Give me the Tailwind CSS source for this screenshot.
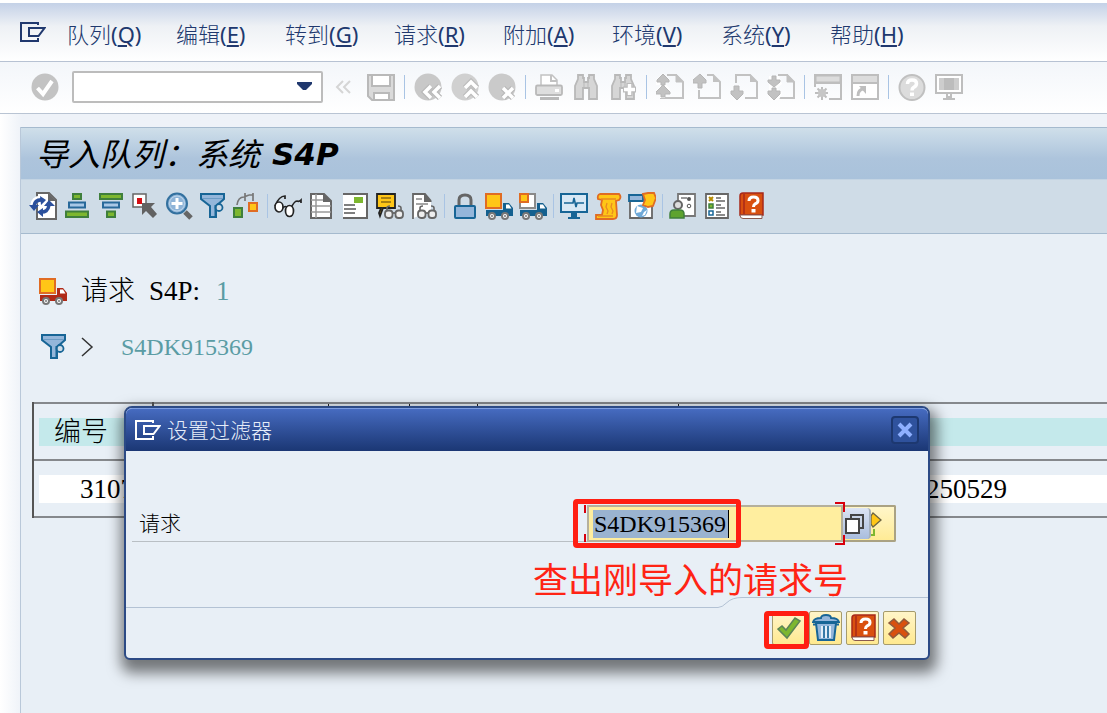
<!DOCTYPE html>
<html lang="zh-CN">
<head>
  <meta charset="UTF-8">
  <meta name="viewport" content="width=device-width, initial-scale=1.0">
  <title>导入队列</title>
  <script src="https://cdn.jsdelivr.net/npm/@tailwindcss/browser@4"></script>
</head>
<body class="relative min-h-screen flex flex-col overflow-x-hidden bg-white text-black font-light font-['Noto_Sans','Noto_Sans_CJK_SC',sans-serif]">

  <!-- Shared icons -->
  <svg class="hidden">
    <symbol id="menu-mark" viewBox="0 0 26 20">
      <path d="M18 3V1H1v18h17v-3M9 6h15.500l-6 8H9z" fill="none" stroke="currentColor" stroke-width="2"/>
    </symbol>
    <symbol id="page" viewBox="0 0 28 28">
      <path d="M20 1l7 8h-7z" fill="#c2c2c2" stroke="#c2c2c2"/>
      <path d="M11 2h9l7 7v16H5v-6" fill="none" stroke="#c2c2c2" stroke-width="2"/>
    </symbol>
    <symbol id="book" viewBox="0 0 28 28">
      <path d="M3 4q0-3 3-3h20v22H3z" fill="#d9500f" stroke="#a8281a" stroke-width="1.500"/>
      <path d="M7 2v20" stroke="#a8281a" stroke-width="1.500"/>
      <path d="M3 23q0 3.500 3 3.500h19V23z" fill="#fff" stroke="#8a5a50"/>
      <path d="M12 9q0-4 4.500-4t4.500 3.500q0 2.500-3 3.500-1.500 1-1.500 3" fill="none" stroke="#fff" stroke-width="3"/>
      <path d="M14.500 17h4v3.500h-4z" fill="#fff"/>
    </symbol>
    <symbol id="filter" viewBox="0 0 28 28">
      <path d="M2 2h23v5l-8 7v11h-6V14L2 7z" fill="#94b6da" stroke="#176596" stroke-width="2"/>
      <path d="M3 6.500h21" stroke="#6c9cc5"/>
      <circle cx="20" cy="15.500" r="3.500" fill="#cfdce7" stroke="#176596" stroke-width="1.800"/>
      <path d="M16.500 13v12" stroke="#176596" stroke-width="2"/>
    </symbol>
    <symbol id="truck" viewBox="0 0 28 28">
      <path d="M1 18h27v6H1zM18 11h6l4 5v3H18z" fill="currentColor"/>
      <path d="M21 12.500h3l2.500 4H21z" fill="#fff"/>
      <circle cx="7" cy="24" r="3" fill="#fff" stroke="#777" stroke-width="2"/>
      <circle cx="20" cy="24" r="3" fill="#fff" stroke="#777" stroke-width="2"/>
      <circle cx="7" cy="24" r="1" fill="#777"/><circle cx="20" cy="24" r="1" fill="#777"/>
    </symbol>
    <symbol id="glasses" viewBox="0 0 20 14">
      <path d="M3 6V3q0-2 3-2M17 6V3q0-2-3-2" fill="none" stroke="#666" stroke-width="1.600"/>
      <rect x="1" y="5.500" width="7.500" height="7.500" rx="3" fill="#eee" stroke="#666" stroke-width="1.800"/>
      <rect x="11.500" y="5.500" width="7.500" height="7.500" rx="3" fill="#eee" stroke="#666" stroke-width="1.800"/>
      <path d="M8.500 8h3" stroke="#666" stroke-width="1.800"/>
    </symbol>
    <symbol id="binoculars" viewBox="0 0 28 28">
      <path d="M6 2h5v3h1v4h4V5h1V2h5v4l3 7v13h-8V15h-6v11H3V13l3-7z" fill="#d6d6d6" stroke="#b9b9b9" stroke-width="1.800"/>
      <path d="M12 10v5M16 10v5" stroke="#b9b9b9"/>
    </symbol>
  </svg>

  <!-- Menu -->
  <nav class="flex items-center h-[62px] pt-1 pl-[20px] border-t-[3px] border-t-white border-b border-b-[#b7c2d3] bg-linear-to-b from-[#c4d1e7] via-[#eef1f5] via-40% to-white text-[22px] leading-8 text-[#20386e] [&_span]:font-normal">
    <svg class="w-[26px] h-[20px] mr-[21px] mb-1 shrink-0"><use href="#menu-mark"/></svg>
    <button class="w-[109px] shrink-0 text-left">队列<span>(<u>Q</u>)</span></button>
    <button class="w-[109px] shrink-0 text-left">编辑<span>(<u>E</u>)</span></button>
    <button class="w-[109px] shrink-0 text-left">转到<span>(<u>G</u>)</span></button>
    <button class="w-[109px] shrink-0 text-left">请求<span>(<u>R</u>)</span></button>
    <button class="w-[109px] shrink-0 text-left">附加<span>(<u>A</u>)</span></button>
    <button class="w-[109px] shrink-0 text-left">环境<span>(<u>V</u>)</span></button>
    <button class="w-[109px] shrink-0 text-left">系统<span>(<u>Y</u>)</span></button>
    <button class="w-[109px] shrink-0 text-left">帮助<span>(<u>H</u>)</span></button>
  </nav>

  <!-- System toolbar -->
  <div class="flex items-center gap-[9px] h-[52px] pb-[2px] pl-[31px] border-b border-[#b9c4d3] bg-linear-to-b from-[#f3f6fa] to-white [&_svg]:size-7 [&>button]:shrink-0">
    <button aria-label="确认">
      <svg viewBox="0 0 28 28"><circle cx="14" cy="14" r="13.500" fill="#c3c3c3"/><path d="M6.500 15l5.500 6 9-13" fill="none" stroke="#fff" stroke-width="4"/></svg>
    </button>
    <div class="relative flex items-center w-[251px] h-8 ml-[4px] shrink-0 border-2 border-[#bcbcbc] rounded-xs bg-white">
      <input type="text" aria-label="命令" class="w-full h-full px-2 pr-9 outline-none text-lg">
      <svg class="absolute right-[2px]" viewBox="0 0 28 28"><path d="M6 9h15v2l-6 6h-3l-6-6z" fill="#20386e"/></svg>
    </div>
    <button aria-label="收起" class="-ml-[2px]">
      <svg viewBox="0 0 28 28"><path d="M13 8l-6 6 6 6M20 8l-6 6 6 6" fill="none" stroke="#d5d5d5" stroke-width="2"/></svg>
    </button>
    <button aria-label="保存">
      <svg viewBox="0 0 28 28"><path d="M1 2h26v25H5l-4-4z" fill="#dadada" stroke="#b9b9b9" stroke-width="2"/><path d="M5 2h18v11H5z" fill="#fff" stroke="#b9b9b9" stroke-width="2"/><path d="M7 20h15v7H7z" fill="#fff" stroke="#b9b9b9" stroke-width="2"/></svg>
    </button>
    <span class="w-px h-6 bg-[#a9c4e4]"></span>
    <button aria-label="返回">
      <svg viewBox="0 0 28 28"><circle cx="14" cy="14" r="13.500" fill="#c8c8c8"/><path d="M17 13l-6 6 6 6M26 13l-6 6 6 6" fill="none" stroke="#b9b9b9" stroke-width="6"/><path d="M17 13l-6 6 6 6M26 13l-6 6 6 6" fill="none" stroke="#fff" stroke-width="3.500"/></svg>
    </button>
    <button aria-label="退出">
      <svg viewBox="0 0 28 28"><circle cx="14" cy="14" r="13.500" fill="#d0d0d0"/><path d="M14 15l6-6 6 6M14 24l6-6 6 6" fill="none" stroke="#bcbcbc" stroke-width="6"/><path d="M14 15l6-6 6 6M14 24l6-6 6 6" fill="none" stroke="#fff" stroke-width="3.500"/></svg>
    </button>
    <button aria-label="取消">
      <svg viewBox="0 0 28 28"><circle cx="14" cy="14" r="13.500" fill="#cacaca"/><path d="M15 15l10 10M25 15l-10 10" stroke="#b9b9b9" stroke-width="6"/><path d="M15 15l10 10M25 15l-10 10" stroke="#fff" stroke-width="3.500"/></svg>
    </button>
    <span class="w-px h-6 bg-[#a9c4e4]"></span>
    <button aria-label="打印">
      <svg viewBox="0 0 28 28"><path d="M6 12V2h11l5 5v5" fill="#fff" stroke="#c2c2c2" stroke-width="1.500"/><path d="M16 2v6h6" fill="none" stroke="#c2c2c2" stroke-width="2"/><rect x="1" y="12.500" width="26" height="9.500" rx="1.500" fill="#dedede" stroke="#b9b9b9" stroke-width="1.800"/><path d="M20 16h4v3h-4z" fill="#fff"/><path d="M5 25.500h19" stroke="#b9b9b9" stroke-width="3"/></svg>
    </button>
    <button aria-label="查找"><svg><use href="#binoculars"/></svg></button>
    <button aria-label="继续查找">
      <svg viewBox="0 0 28 28"><use href="#binoculars"/><path d="M14 16.500h13M20.500 10v13" stroke="#bbb" stroke-width="6"/><path d="M15 16.500h11M20.500 11v11" stroke="#fff" stroke-width="3.500"/></svg>
    </button>
    <span class="w-px h-6 bg-[#a9c4e4]"></span>
    <button aria-label="首页">
      <svg viewBox="0 0 28 28"><use href="#page"/><path d="M7 0l7 7-3 3H9l5 6-3 5H9v4H4v-4H0v-3l5-6H0V7z" fill="#fff"/><path d="M7 1l6 6v2H9v3H5V9H1V7zM7 12l7 7v2H9v3H5v-3H0v-2z" fill="#c2c2c2" stroke="#b6b6b6"/></svg>
    </button>
    <button aria-label="上一页">
      <svg viewBox="0 0 28 28"><path d="M20 1l7 8h-7z" fill="#c2c2c2"/><path d="M14 2h6l7 7v16H6v-8" fill="none" stroke="#c2c2c2" stroke-width="2"/><path d="M7 1l6 6v3H9v5H5v-5H0V7z" fill="#c2c2c2" stroke="#b6b6b6"/></svg>
    </button>
    <button aria-label="下一页">
      <svg viewBox="0 0 28 28"><path d="M20 1l7 8h-7z" fill="#c2c2c2"/><path d="M6 10V2h14l7 7v16H15" fill="none" stroke="#c2c2c2" stroke-width="2"/><path d="M4 13h5v5h4v3l-6 6-6-6v-3h3z" fill="#c2c2c2" stroke="#b6b6b6"/></svg>
    </button>
    <button aria-label="末页">
      <svg viewBox="0 0 28 28"><use href="#page"/><path d="M2 3h10l3 8-5 4 5 5-3 7H2v-7z" fill="#fff"/><path d="M5 3h4v4h4v2l-6 5-6-5V7h4zM5 15h4v3h4v3l-6 6-6-6v-3h4z" fill="#c2c2c2" stroke="#b6b6b6"/></svg>
    </button>
    <span class="w-px h-6 bg-[#a9c4e4]"></span>
    <button aria-label="新建会话">
      <svg viewBox="0 0 28 28"><path d="M1 14V2h26v24H15" fill="none" stroke="#bebebe" stroke-width="2"/><path d="M2 3h24v6H2z" fill="#dcdcdc" stroke="#bebebe"/><path d="M2 10h24" stroke="#bebebe" stroke-width="2"/><path d="M8 14v13M1 20h13M3.500 15.500l9 9M12.500 15.500l-9 9" stroke="#bebebe" stroke-width="2"/><circle cx="8" cy="20" r="4" fill="#c6c6c6"/></svg>
    </button>
    <button aria-label="快捷方式">
      <svg viewBox="0 0 28 28"><path d="M1 2h26v24H1z" fill="#fff" stroke="#bebebe" stroke-width="2"/><path d="M2 3h24v6H2z" fill="#dcdcdc"/><path d="M2 10h24" stroke="#bebebe" stroke-width="2"/><path d="M7 23q0-7 6-7" fill="none" stroke="#bebebe" stroke-width="3"/><path d="M8 13h7v8z" fill="#bebebe"/></svg>
    </button>
    <span class="w-px h-6 bg-[#a9c4e4]"></span>
    <button aria-label="帮助">
      <svg viewBox="0 0 28 28"><circle cx="14" cy="14.500" r="12.500" fill="#dcdcdc" stroke="#c0c0c0" stroke-width="2"/><path d="M9.500 11q0-4 4.500-4t4.500 3.500q0 2.500-3 4-1.500 1-1.500 3" fill="none" stroke="#fff" stroke-width="3.500"/><path d="M12 19.500h4v3.500h-4z" fill="#fff"/></svg>
    </button>
    <button aria-label="布局">
      <svg viewBox="0 0 28 28"><path d="M1 2h26v18H1z" fill="#fff" stroke="#bebebe" stroke-width="2"/><path d="M4 5h20v12H4z" fill="#bcbcbc"/><path d="M4 5h5v12H4zM19 5h5v12h-5z" fill="#cdcdcd"/><path d="M12 20v4h4v-4M8 26h12" fill="none" stroke="#bebebe" stroke-width="2"/></svg>
    </button>
  </div>

  <!-- Work area -->
  <main class="grow flex flex-col pt-[13px] pl-[20px] bg-linear-to-r from-white to-[#eef2f8] to-2%">
    <section class="grow flex flex-col border-l border-[#b9c8d9] bg-[#e8eff6]">
      <h1 class="flex items-center h-[52px] pl-[15px] border-t border-[#a5bace] bg-linear-to-b from-[#cfdfea] via-[#adc4dc] via-60% to-[#a9c2db] text-[32px] leading-10 italic font-normal">
        导入队列：系统<span class="ml-[12px] text-[31px] font-bold font-['DejaVu_Sans',sans-serif]">S4P</span>
      </h1>

      <!-- Application toolbar -->
      <div class="flex items-center gap-[6px] h-[55px] pb-[2px] pl-[8px] border-y border-t-[#c3d4e3] border-b-[#a5bace] bg-[#cfdce7] [&_svg]:size-7 [&>button]:shrink-0">
        <button aria-label="刷新">
          <svg viewBox="0 0 28 28"><path d="M8 1h12l7 7v19H8z" fill="#fff" stroke="#666" stroke-width="2"/><path d="M19 1l8 8h-8z" fill="#666"/><path d="M4 14q1-8 10-7M21 13q-1 9-10 8" fill="none" stroke="#fff" stroke-width="6"/><path d="M5 14q1-7 9-6M20 13q-1 8-9 7" fill="none" stroke="#2b509c" stroke-width="3.500"/><path d="M0 13h10l-5 6zM15 14h11l-6-6zM11 4l6 4-5 5zM14 16v9l-6-5z" fill="#2b509c"/></svg>
        </button>
        <button aria-label="升序">
          <svg viewBox="0 0 28 28"><g stroke-width="2"><rect x="10" y="2" width="8" height="5" fill="#7db72f" stroke="#3f7f3c"/><rect x="6" y="10.500" width="16" height="5" fill="#a9c8e6" stroke="#28699a"/><rect x="3" y="19.500" width="22" height="5.500" fill="#7db72f" stroke="#3f7f3c"/></g></svg>
        </button>
        <button aria-label="降序">
          <svg viewBox="0 0 28 28"><g stroke-width="2"><rect x="3" y="2" width="22" height="5" fill="#7db72f" stroke="#3f7f3c"/><rect x="6" y="10.500" width="16" height="5" fill="#a9c8e6" stroke="#28699a"/><rect x="10" y="19.500" width="8" height="5.500" fill="#7db72f" stroke="#3f7f3c"/></g></svg>
        </button>
        <button aria-label="选择">
          <svg viewBox="0 0 28 28"><path d="M2 2h13v13H2z" fill="#fff" stroke="#666" stroke-width="1.500"/><path d="M6 6h5v6H6z" fill="#d40f14"/><path d="M11 11h13l-4 4 6 7-4 4-7-7-4 4z" fill="#626262"/></svg>
        </button>
        <button aria-label="放大">
          <svg viewBox="0 0 28 28"><circle cx="12" cy="11.500" r="10" fill="#8fb4d8" stroke="#33719f" stroke-width="2"/><circle cx="12" cy="11.500" r="7.500" fill="none" stroke="#c0d8ec"/><path d="M12 6v11M6.500 11.500h11" stroke="#fff" stroke-width="3"/><path d="M20 20l6 6" stroke="#666" stroke-width="5"/></svg>
        </button>
        <button aria-label="过滤器"><svg><use href="#filter"/></svg></button>
        <button aria-label="传输路径">
          <svg viewBox="0 0 28 28"><path d="M4 13q1-8 7-8l5-2M12 1v8M16 3h4V1v8" fill="none" stroke="#777" stroke-width="1.700"/><path d="M1 16h8v9H1z" fill="#7db72f" stroke="#3f7f3c" stroke-width="2"/><path d="M16 11h8v8h-8z" fill="#ffc617" stroke="#e06c23" stroke-width="2"/></svg>
        </button>
        <span class="w-px h-6 bg-[#a9c4e4]"></span>
        <button aria-label="显示">
          <svg viewBox="0 0 28 28"><path d="M1 14q4-10 10-10v3M16 18q4-9 7-9 2 1 4-1v3M9 16q2-3 5 0" fill="none" stroke="#222" stroke-width="1.700"/><ellipse cx="5" cy="15" rx="4" ry="5" fill="#fff" stroke="#222" stroke-width="1.700"/><ellipse cx="15.500" cy="19" rx="4" ry="5.500" fill="#fff" stroke="#222" stroke-width="1.700"/></svg>
        </button>
        <button aria-label="列表">
          <svg viewBox="0 0 28 28"><path d="M3 2h13l7 7v17H3z" fill="#fff" stroke="#666" stroke-width="2"/><path d="M15 1l9 9h-9z" fill="#666"/><path d="M8 2v24M3 8h12M3 14h20M3 20h20" stroke="#9a9a9a" stroke-width="1.500"/></svg>
        </button>
        <button aria-label="表单">
          <svg viewBox="0 0 28 28"><path d="M1 2h24v24H1z" fill="#fff"/><path d="M1 2h24v24H1" fill="none" stroke="#666" stroke-width="2"/><path d="M12 5h9v6h-9z" fill="#7db72f"/><path d="M2 13h11M2 17h12M2 21h11" stroke="#555" stroke-width="1.600"/></svg>
        </button>
        <button aria-label="显示日志">
          <svg viewBox="0 0 28 28"><path d="M1 2h18v14H7l-3 8-1-3 2-5H1z" fill="#ffc617" stroke="#222" stroke-width="1.800"/><path d="M5 6h10M5 10h10" stroke="#8c6a10" stroke-width="1.500"/><use href="#glasses" x="8" y="13" width="20" height="14"/></svg>
        </button>
        <button aria-label="查看文档">
          <svg viewBox="0 0 28 28"><path d="M3 1h12l6 7v12l-18 6z" fill="#fff"/><path d="M3 27V2h12l6 7" fill="none" stroke="#666" stroke-width="1.800"/><path d="M14 1l8 9h-8z" fill="#666"/><path d="M6 7h6M6 12h12" stroke="#888" stroke-width="1.500"/><use href="#glasses" x="7" y="13" width="20" height="14"/></svg>
        </button>
        <span class="w-px h-6 bg-[#a9c4e4]"></span>
        <button aria-label="锁定">
          <svg viewBox="0 0 28 28"><path d="M8 14V8q0-5 6-5t6 5v6" fill="none" stroke="#666" stroke-width="3"/><rect x="4" y="14" width="20" height="12" rx="1" fill="#94b6da" stroke="#176596" stroke-width="2"/></svg>
        </button>
        <button aria-label="导入全部" class="text-[#14608f]">
          <svg viewBox="0 0 28 28"><use href="#truck"/><path d="M1 2h15v14H1z" fill="#ffc617" stroke="#e06c23" stroke-width="2"/></svg>
        </button>
        <button aria-label="导入请求" class="text-[#14608f]">
          <svg viewBox="0 0 28 28"><use href="#truck"/><path d="M1 2h15v14H1z" fill="#fff" stroke="#8a8a8a" stroke-width="2"/><path d="M1 2h8v8H1z" fill="#ffc617" stroke="#e06c23" stroke-width="2"/></svg>
        </button>
        <span class="w-px h-6 bg-[#a9c4e4]"></span>
        <button aria-label="监视器">
          <svg viewBox="0 0 28 28"><path d="M1 2h26v18H1z" fill="#d8e8f5" stroke="#176596" stroke-width="2"/><path d="M4 11h9l1-5 2 9 1-4h7" fill="none" stroke="#176596" stroke-width="1.600"/><path d="M11 21h6v4h3v2H8v-2h3z" fill="#176596"/></svg>
        </button>
        <button aria-label="日志">
          <svg viewBox="0 0 28 28"><path d="M6 2h19q3 3 0 6l-3 1 1 14q0 4-4 4H2v-4h6l1-5-2-5 1-5-4-1q-1-4 2-5z" fill="#ffc617" stroke="#e06c23" stroke-width="1.800"/><path d="M7 7h15M13 11l-1 4 2 4-1 3M18 11l-1 4 2 4-1 3M4 24h15" fill="none" stroke="#e88a23" stroke-width="1.300"/></svg>
        </button>
        <button aria-label="传输日志">
          <svg viewBox="0 0 28 28"><path d="M2 4h22v22H2z" fill="#fff" stroke="#666" stroke-width="1.800"/><path d="M1 3h14v6H1z" fill="#94b6da" stroke="#176596" stroke-width="1.800"/><circle cx="13" cy="19" r="6.500" fill="#6fa9d8"/><path d="M9 14l6 2-2 4-5 1zM16 20l3-2-2 5-3 1z" fill="#fff"/><path d="M15 2l5-1h6l2 5-3 8-5 1-5-2 2-5z" fill="#ffc617" stroke="#e06c23" stroke-width="1.800"/></svg>
        </button>
        <span class="w-px h-6 bg-[#a9c4e4]"></span>
        <button aria-label="用户">
          <svg viewBox="0 0 28 28"><path d="M9 2h17v22H9z" fill="#fff" stroke="#777" stroke-width="1.800"/><path d="M12 6h6" stroke="#777" stroke-width="1.500"/><circle cx="20" cy="7" r="2" fill="#555"/><circle cx="20" cy="14" r="1.800" fill="#fff" stroke="#555"/><circle cx="9" cy="13" r="4" fill="#ddd" stroke="#666" stroke-width="2"/><path d="M1 26v-4q0-4 4-4h6q4 0 4 4v4z" fill="#5ea32f" stroke="#3f7f3c" stroke-width="1.500"/></svg>
        </button>
        <button aria-label="图例">
          <svg viewBox="0 0 28 28"><path d="M3 2h22v24H3z" fill="#fff" stroke="#666" stroke-width="1.800"/><path d="M6 5l4 4M10 5L6 9" stroke="#b58a00" stroke-width="2"/><path d="M6 12h4v4H6z" fill="#7db72f" stroke="#3f7f3c" stroke-width="1.500"/><path d="M6 19h4v4H6z" fill="#fff" stroke="#176596" stroke-width="1.500"/><path d="M13 6h5M13 9h9M13 13h5M13 16h9M13 20h5M13 23h9" stroke="#666" stroke-width="1.400"/></svg>
        </button>
        <button aria-label="帮助"><svg><use href="#book"/></svg></button>
      </div>

      <!-- Queue -->
      <div class="pl-[11px] text-[27px] leading-10 font-['Liberation_Serif','Noto_Sans_CJK_SC',serif]">
        <p class="flex items-center h-10 mt-[37px]">
          <svg class="size-7 ml-[7px] mr-[14px] text-[#b02a18]" viewBox="0 0 28 28"><use href="#truck"/><path d="M1 2h15v14H1z" fill="#ffc617" stroke="#e06c23" stroke-width="2"/></svg>
          请求<span class="ml-[14px]">S4P:</span><span class="ml-[16px] text-[#5a9ca4]">1</span>
        </p>
        <p class="flex items-center h-10 mt-4">
          <svg class="size-7 ml-[8px] mr-[13px]"><use href="#filter"/></svg>
          <svg class="w-[13px] h-[20px]" viewBox="0 0 13 20"><path d="M1 1l10 9-10 9" fill="none" stroke="#333" stroke-width="1.500"/></svg>
          <span class="ml-[27px] text-2xl leading-10 text-[#5a9ca4]">S4DK915369</span>
        </p>

        <table class="w-full mt-[35px] table-fixed border-collapse text-left leading-7">
          <colgroup>
            <col class="w-[120px]"><col class="w-[175px]"><col class="w-[81px]"><col class="w-[68px]"><col class="w-[201px]"><col>
          </colgroup>
          <thead>
            <tr class="h-[57px] border-y-2 border-[#85888c]">
              <th class="p-0 pl-[5px] border-l-2 border-[#555] font-light"><div class="h-7 pl-[15px] bg-[#c4e9eb]">编号</div></th>
              <th class="p-0 border-l-2 border-[#555]"><div class="h-7 bg-[#c4e9eb]"></div></th>
              <th class="p-0 border-l border-[#222]"><div class="h-7 bg-[#c4e9eb]"></div></th>
              <th class="p-0 border-l border-[#222]"><div class="h-7 bg-[#c4e9eb]"></div></th>
              <th class="p-0 border-l border-[#222]"><div class="h-7 bg-[#c4e9eb]"></div></th>
              <th class="p-0 border-l border-[#222]"><div class="h-7 bg-[#c4e9eb]"></div></th>
            </tr>
          </thead>
          <tbody>
            <tr class="h-[57px] border-b-2 border-[#85888c]">
              <td class="p-0 pl-[5px] border-l-2 border-[#555]"><div class="h-7 pl-[41px] bg-white">3107</div></td>
              <td class="p-0"><div class="h-7 bg-white"></div></td>
              <td class="p-0"><div class="h-7 bg-white"></div></td>
              <td class="p-0"><div class="h-7 bg-white"></div></td>
              <td class="p-0"><div class="h-7 bg-white"></div></td>
              <td class="p-0"><div class="h-7 pl-[221px] bg-white">20250529</div></td>
            </tr>
          </tbody>
        </table>
      </div>
    </section>
  </main>

  <!-- Filter dialog -->
  <div role="dialog" aria-labelledby="dialog-title" class="absolute left-[124px] top-[406px] w-[806px] border-2 border-[#2c4a85] rounded-t-lg rounded-b-md bg-[#e8eff6] shadow-[2px_8px_14px_5px_rgba(0,0,0,0.5)]">
    <header class="flex items-center h-[43px] px-[9px] rounded-t-md border-t border-[#7c9ce0] bg-linear-to-b from-[#466bc0] to-[#1b3774] text-[21px] leading-8 text-[#e6edf9]">
      <svg class="w-[26px] h-[20px] mr-[6px] text-white"><use href="#menu-mark"/></svg>
      <h2 id="dialog-title" class="grow">设置过滤器</h2>
      <button aria-label="关闭" class="flex items-center justify-center size-7 border-2 border-[#1d3870] rounded-sm bg-[#2f529d]">
        <svg class="size-[18px]" viewBox="0 0 18 18"><path d="M3 3l12 12M15 3L3 15" stroke="#8fb0ff" stroke-width="4"/></svg>
      </button>
    </header>

    <div class="relative flex h-[37px] mt-[54px] ml-[6px] mr-[32px]">
      <label for="request" class="grow pl-[7px] border-b border-[#b9bfc4] text-[21px] leading-9">请求</label>
      <div class="flex items-center w-[256px] border-2 border-[#b5b09c] pl-[4px] bg-[#ffee9f]">
        <input id="request" type="text" value="S4DK915369" class="w-[136px] h-[28px] pl-[1px] border-r border-black bg-[#9ab3d0] text-2xl font-['Liberation_Serif',serif] outline-none">
      </div>
      <div class="flex items-center w-[53px] border-2 border-l-0 border-[#aaa283] rounded-r-xs bg-linear-to-b from-[#fff6c9] to-[#ffeb95]">
        <button aria-label="搜索帮助" class="w-7 h-[31px] rounded-sm border-r-2 border-[#a5b0bd] bg-linear-to-b from-[#dce4f3] to-[#a9bddd]">
          <svg class="size-6" viewBox="0 0 24 24"><path d="M8 3h12v13H8z" fill="#c9d4e6" stroke="#444" stroke-width="2"/><path d="M3 7h13v14H3z" fill="#fff" stroke="#444" stroke-width="2"/></svg>
        </button>
        <button aria-label="多重选择">
          <svg class="w-[13px] h-[26px]" viewBox="0 0 13 26"><path d="M0 5l2-3 8 7-8 7-2-3z" fill="#ffc617" stroke="#6b6340" stroke-width="1.300"/><path d="M0 24h3v-6" fill="none" stroke="#7db72f" stroke-width="2"/></svg>
        </button>
      </div>
      <!-- focus corners -->
      <span class="absolute right-[51px] -top-[3px] w-[10px] h-[10px] border-t-2 border-r-2 border-[#d8000c]"></span>
      <span class="absolute right-[51px] -bottom-[3px] w-[10px] h-[10px] border-b-2 border-r-2 border-[#d8000c]"></span>
      <span class="absolute right-[310px] top-0 w-[2px] h-2 bg-[#d8000c]"></span>
      <span class="absolute right-[310px] bottom-0 w-[2px] h-2 bg-[#d8000c]"></span>
      <span class="absolute right-[155px] -top-[6px] w-[168px] h-[49px] border-[5px] border-[#ff1e12] rounded-sm pointer-events-none"></span>
    </div>

    <p class="absolute left-[407px] top-[149px] text-[35px] leading-[46px] font-normal whitespace-nowrap text-[#ff2414]">查出刚导入的请求号</p>

    <div class="flex mt-[55px]">
      <span class="grow h-[11px] border-b border-[#b3c2d4]"></span>
      <svg class="w-6 h-[11px]" viewBox="0 0 24 11"><path d="M0 10.500q4 0 9-5t15-5" fill="none" stroke="#b3c2d4"/></svg>
      <span class="w-[186px] h-[11px] border-t border-[#b3c2d4]"></span>
    </div>

    <footer class="relative flex justify-end gap-1 pt-[3px] pb-[13px] pr-[12px] [&_svg]:size-7 [&>button]:flex [&>button]:items-center [&>button]:justify-center [&>button]:w-[33px] [&>button]:h-[34px] [&>button]:border [&>button]:border-[#a59b6c] [&>button]:rounded-xs [&>button]:bg-linear-to-b [&>button]:from-[#fff5c8] [&>button]:to-[#ffe98f]">
      <button aria-label="继续"><svg viewBox="0 0 28 28"><path d="M3 15l4-3 4 4L20 4l5 3-13 17z" fill="#7db72f" stroke="#5b8457" stroke-width="1.500"/></svg></button>
      <button aria-label="删除"><svg viewBox="0 0 28 28"><path d="M1 8q1-4 8-4 0-3 5-3t5 3q7 0 8 4z" fill="#94b6da" stroke="#176596" stroke-width="1.800"/><path d="M1 10.500h3M24 10.500h3" stroke="#176596" stroke-width="2"/><path d="M4 9h20l-2 17H6z" fill="#94b6da" stroke="#176596" stroke-width="2"/><path d="M10 12v12M14 12v12M18 12v12" stroke="#e3eef8" stroke-width="2"/><path d="M12 12v12M16 12v12" stroke="#176596" stroke-width="1.500"/></svg></button>
      <button aria-label="帮助"><svg><use href="#book"/></svg></button>
      <button aria-label="取消"><svg viewBox="0 0 28 28"><path d="M8 5l5 5 5-5 5 4-6 5 6 6-4 4-6-5-6 5-4-4 6-6-6-5z" fill="#d9500f" stroke="#8f5a3e" stroke-width="1.500"/></svg></button>
      <span class="absolute right-[119px] top-[3px] w-[45px] h-[38px] border-[5px] border-[#ff1e12] rounded-sm pointer-events-none"></span>
    </footer>
  </div>

</body>
</html>
